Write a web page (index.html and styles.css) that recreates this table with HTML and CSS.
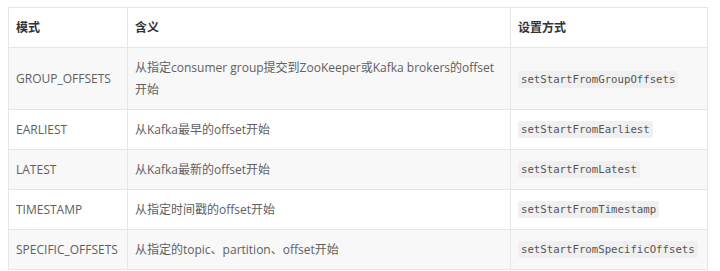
FILE: index.html
```html
<!DOCTYPE html>
<html>
<head>
<meta charset="utf-8">
<link rel="stylesheet" href="styles.css">
</head>
<body>
<table class="modes">
  <colgroup>
    <col class="c1"><col class="c2"><col class="c3">
  </colgroup>
  <thead>
    <tr><th>模式</th><th>含义</th><th>设置方式</th></tr>
  </thead>
  <tbody>
    <tr><td>GROUP_OFFSETS</td><td>从指定consumer group提交到ZooKeeper或Kafka brokers的offset开始</td><td><code>setStartFromGroupOffsets</code></td></tr>
    <tr><td>EARLIEST</td><td>从Kafka最早的offset开始</td><td><code>setStartFromEarliest</code></td></tr>
    <tr><td>LATEST</td><td>从Kafka最新的offset开始</td><td><code>setStartFromLatest</code></td></tr>
    <tr><td>TIMESTAMP</td><td>从指定时间戳的offset开始</td><td><code>setStartFromTimestamp</code></td></tr>
    <tr><td>SPECIFIC_OFFSETS</td><td>从指定的topic、partition、offset开始</td><td><code>setStartFromSpecificOffsets</code></td></tr>
  </tbody>
</table>
</body>
</html>
```
FILE: styles.css
```css
html, body { margin: 0; padding: 0; background: #fff; }
body { padding: 7px 0 0 8px; font-family: "Open Sans", "Noto Sans CJK SC", sans-serif; font-size: 12px; color: #606060; }
.modes { border-collapse: collapse; width: 699px; table-layout: fixed; }
.c1 { width: 119px; }
.c2 { width: 383px; }
.c3 { width: 197px; }
.modes th, .modes td { border: 1px solid #e6e6e6; padding: 8px 7px; line-height: 22px; text-align: left; vertical-align: middle; }
.modes th { font-weight: bold; color: #333; background: #fff; padding-top: 9px; padding-bottom: 8px; }
.modes tbody tr:nth-child(odd) { background: #f8f8f8; }
.modes tbody tr:nth-child(even) { background: #fff; }
.modes tbody tr:first-child td { padding-top: 9px; padding-bottom: 8px; }
code { font-family: "DejaVu Sans Mono", monospace; font-size: 10.7px; background: #f0f0f0; color: #555; padding: 2px 3px; border-radius: 3px; }
```
